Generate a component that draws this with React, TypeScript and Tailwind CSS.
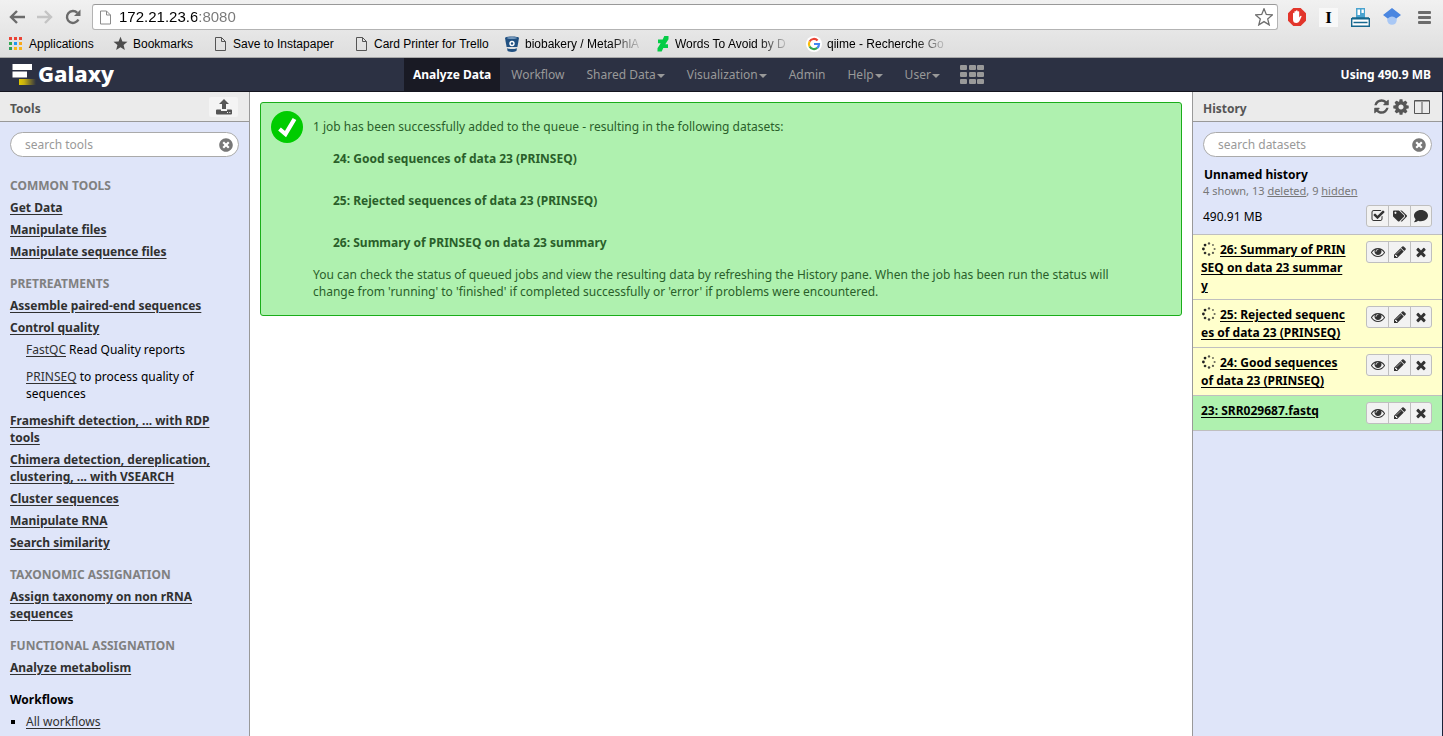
import React from "react";
import { FaComment, FaTags, FaTimesCircle } from "react-icons/fa";

const ICONS = {
  refresh:
    "M1639 1056q0 5-1 7-64 268-268 434.5t-478 166.5q-146 0-282.5-55t-243.5-157l-129 129q-19 19-45 19t-45-19-19-45v-448q0-26 19-45t45-19h448q26 0 45 19t19 45-19 45l-137 137q71 66 161 102t187 36q134 0 250-65t186-179q11-17 53-117 8-23 30-23h192q13 0 22.5 9.5t9.5 22.5zm25-800v448q0 26-19 45t-45 19h-448q-26 0-45-19t-19-45 19-45l138-138q-148-137-349-137-134 0-250 65t-186 179q-11 17-53 117-8 23-30 23h-199q-13 0-22.5-9.5t-9.5-22.5v-7q65-268 270-434.5t480-166.5q146 0 284 55.5t245 156.5l130-129q19-19 45-19t45 19 19 45z",
  cog: "M1152 896q0-106-75-181t-181-75-181 75-75 181 75 181 181 75 181-75 75-181zm512-109v222q0 12-8 23t-20 13l-185 28q-19 54-39 91 35 50 107 138 10 12 10 25t-9 23q-27 37-99 108t-94 71q-12 0-26-9l-138-108q-44 23-91 38-16 136-29 186-7 28-36 28h-222q-14 0-24.5-8.5t-11.5-21.5l-28-184q-49-16-90-37l-141 107q-10 9-25 9-14 0-25-11-126-114-165-168-7-10-7-23 0-12 8-23 15-21 51-66.5t54-70.5q-27-50-41-99l-183-27q-13-2-21-12.5t-8-23.5v-222q0-12 8-23t19-13l186-28q14-46 39-92-40-57-107-138-10-12-10-24 0-10 9-23 26-36 98.5-107.5t94.5-71.5q13 0 26 10l138 107q44-23 91-38 16-136 29-186 7-28 36-28h222q14 0 24.5 8.5t11.5 21.5l28 184q49 16 90 37l142-107q9-9 24-9 13 0 25 10 129 119 165 170 7 8 7 22 0 12-8 23-15 21-51 66.5t-54 70.5q26 50 41 98l183 28q13 2 21 12.5t8 23.5z",
  eye: "M1664 960q-152-236-381-353 61 104 61 225 0 185-131.5 316.5t-316.5 131.5-316.5-131.5-131.5-316.5q0-121 61-225-229 117-381 353 133 205 333.5 326.5t434.5 121.5 434.5-121.5 333.5-326.5zm-720-384q0-20-14-34t-34-14q-125 0-214.5 89.5t-89.5 214.5q0 20 14 34t34 14 34-14 14-34q0-86 61-147t147-61q20 0 34-14t14-34zm848 384q0 34-20 69-140 230-376.5 368.5t-499.5 138.5-499.5-139-376.5-368q-20-35-20-69t20-69q140-229 376.5-368t499.5-139 499.5 139 376.5 368q20 35 20 69z",
  pencil:
    "M491 1536l91-91-235-235-91 91v107h128v128h107zm523-928q0-22-22-22-10 0-17 7l-542 542q-7 7-7 17 0 22 22 22 10 0 17-7l542-542q7-7 7-17zm-54-192l416 416-832 832h-416v-416zm683 96q0 53-37 90l-166 166-416-416 166-165q36-38 90-38 53 0 91 38l235 234q37 39 37 91z",
  times:
    "M1490 1322q0 40-28 68l-136 136q-28 28-68 28t-68-28l-294-294-294 294q-28 28-68 28t-68-28l-136-136q-28-28-28-68t28-68l294-294-294-294q-28-28-28-68t28-68l136-136q28-28 68-28t68 28l294 294 294-294q28-28 68-28t68 28l136 136q28 28 28 68t-28 68l-294 294 294 294q28 28 28 68z",
  check:
    "M1472 930v318q0 119-84.5 203.5t-203.5 84.5h-832q-119 0-203.5-84.5t-84.5-203.5v-832q0-119 84.5-203.5t203.5-84.5h832q63 0 117 25 15 7 18 23 3 17-9 29l-49 49q-10 10-23 10-3 0-9-2-23-6-45-6h-832q-66 0-113 47t-47 113v832q0 66 47 113t113 47h832q66 0 113-47t47-113v-254q0-13 9-22l64-64q10-10 23-10 6 0 12 3 20 8 20 29zm231-489l-814 814q-24 24-57 24t-57-24l-430-430q-24-24-24-57t24-57l110-110q24-24 57-24t57 24l263 263 647-647q24-24 57-24t57 24l110 110q24 24 24 57t-24 57z",
};

function Icon({ name, className }: { name: keyof typeof ICONS; className: string }) {
  return (
    <svg viewBox="0 0 1792 1792" fill="currentColor" aria-hidden="true" className={className}>
      <path d={ICONS[name]} />
    </svg>
  );
}

function PageIcon({ className }: { className: string }) {
  return (
    <svg viewBox="0 0 11 14" fill="none" stroke="currentColor" aria-hidden="true" className={className}>
      <path d="M.5 .5H6.5L10.5 4.5V13.5H.5ZM6.5 .5V4.5H10.5" />
    </svg>
  );
}

function AppsIcon() {
  const colors = ["#ea4335", "#ea4335", "#ea4335", "#34a853", "#2196f3", "#f9a81a", "#2e9e5b", "#f9b61a", "#f9b61a"];
  return (
    <svg viewBox="0 0 13 13" className="size-[13px]" aria-hidden="true">
      {colors.map((c, i) => (
        <rect key={i} x={(i % 3) * 5} y={Math.floor(i / 3) * 5} width="3" height="3" fill={c} />
      ))}
    </svg>
  );
}

function BucketIcon() {
  return (
    <svg viewBox="0 0 14 16" className="h-4 w-3.5" aria-hidden="true">
      <path d="M0 2C0 0 14 0 14 2L12.4 11H1.6Z" fill="#205081" />
      <path d="M2 12.2Q7 14 12 12.2L11.4 15Q7 17 2.6 15Z" fill="#205081" />
      <ellipse cx="7" cy="2" rx="5" ry=".8" fill="#8fb0d0" />
      <circle cx="7" cy="7.5" r="2.7" fill="#fff" />
      <circle cx="7" cy="7.5" r="1.2" fill="#205081" />
    </svg>
  );
}

function DeviantIcon() {
  return (
    <svg viewBox="0 0 12 16" className="h-4 w-3" aria-hidden="true">
      <path d="M11.500 0V3.200L8.300 8.300H11V12H6.300L4.700 15.500H.5V12.300L3.700 7.200H1V3.500H5.700L7.300 0Z" fill="#05cc47" />
    </svg>
  );
}

function GoogleIcon() {
  return (
    <svg viewBox="0 0 16 16" className="size-4" aria-hidden="true">
      <circle cx="8" cy="8" r="8" fill="#fff" />
      <g fill="none" strokeWidth="2.200">
        <path d="M3.600 5.500A5 5 0 0 1 11.600 4.500" stroke="#ea4335" />
        <path d="M3.600 10.500A5 5 0 0 1 3.600 5.500" stroke="#fbbc05" />
        <path d="M11.300 11.800A5 5 0 0 1 3.600 10.500" stroke="#34a853" />
        <path d="M8 8H13A5 5 0 0 1 11.300 11.800" stroke="#4285f4" />
      </g>
    </svg>
  );
}

function StarIcon({ className, outline }: { className: string; outline?: boolean }) {
  return (
    <svg
      viewBox="0 0 18 18"
      aria-hidden="true"
      className={className}
      fill={outline ? "#fff" : "currentColor"}
      stroke="currentColor"
      strokeWidth={outline ? 1.3 : 0}
    >
      <path d="M9 .8L11.300 6.500L17.400 6.900L12.700 10.900L14.200 16.900L9 13.600L3.800 16.900L5.300 10.900L.6 6.900L6.700 6.500Z" />
    </svg>
  );
}

const bookmarks = [
  { label: "Applications", icon: <AppsIcon />, box: "w-[104px] gap-[7px]" },
  { label: "Bookmarks", icon: <StarIcon className="size-[15px] text-[#4d4d4d]" />, box: "w-[102px] gap-[5px]" },
  { label: "Save to Instapaper", icon: <PageIcon className="h-3.5 w-[11px] text-[#555]" />, box: "w-[141px] gap-[7px]" },
  { label: "Card Printer for Trello", icon: <PageIcon className="h-3.5 w-[11px] text-[#555]" />, box: "w-[149px] gap-[7px]" },
  { label: "biobakery / MetaPhlA", icon: <BucketIcon />, box: "w-[152px] gap-[6px]", fade: true },
  { label: "Words To Avoid by D", icon: <DeviantIcon />, box: "w-[149px] gap-[6px]", fade: true },
  { label: "qiime - Recherche Go", icon: <GoogleIcon />, box: "gap-[5px]", fade: true },
];

function BrowserBar() {
  return (
    <header className="border-b border-[#a8a8a8] bg-linear-to-b from-[#f1f1f1] to-[#dedede] font-['Liberation_Sans',Arial,sans-serif]">
      <div className="flex h-8 items-center pt-[2px] pl-[9px] pr-3">
        <div className="flex w-[83px] shrink-0 items-center gap-3 text-[#6b6b6b]">
          <button aria-label="Back">
            <svg viewBox="0 0 16 14" className="h-3.5 w-4" fill="none" stroke="currentColor" strokeWidth="2.400" aria-hidden="true">
              <path d="M16 7H2.500M8 1L2 7L8 13" />
            </svg>
          </button>
          <button aria-label="Forward" className="text-[#c4c4c4]">
            <svg viewBox="0 0 16 14" className="h-3.5 w-4" fill="none" stroke="currentColor" strokeWidth="2.400" aria-hidden="true">
              <path d="M0 7H13.500M8 1L14 7L8 13" />
            </svg>
          </button>
          <button aria-label="Reload">
            <svg viewBox="0 0 16 16" className="size-4" fill="none" stroke="currentColor" strokeWidth="2.400" aria-hidden="true">
              <path d="M13.400 10.500A6 6 0 1 1 12.300 3.800" />
              <path d="M15.500 .5V7H9Z" fill="currentColor" stroke="none" />
            </svg>
          </button>
        </div>
        <div className="flex h-[26px] min-w-0 flex-1 items-center rounded-[3px] border border-[#b3b3b3] border-t-[#999] bg-white pl-[7px] pr-1">
          <PageIcon className="h-[15px] w-[11px] shrink-0 text-[#8a8a8a]" />
          <input
            aria-label="Address"
            defaultValue="172.21.23.6:8080"
            className="ml-2 min-w-0 flex-1 bg-[linear-gradient(to_right,#000_78px,#777_78px)] bg-clip-text text-[15px] leading-5 text-transparent outline-none"
          />
          <button aria-label="Bookmark this page">
            <StarIcon outline className="size-[18px] text-[#6e6e6e]" />
          </button>
        </div>
        <div className="flex shrink-0 items-center pl-2.5">
          <button aria-label="Ad blocker" className="mr-[13px]">
            <svg viewBox="0 0 18 18" className="size-[18px]" aria-hidden="true">
              <path d="M5.300 0H12.700L18 5.300V12.700L12.700 18H5.300L0 12.700V5.300Z" fill="#e2352b" />
              <path
                d="M5 9V5.200Q5.700 4.500 6.400 5.200V8.200V3.400Q7.200 2.600 8 3.400V8V2.700Q8.800 2 9.600 2.700V8V3.600Q10.400 2.900 11.200 3.600V9.500L12.300 8Q13.600 7.500 13.600 8.500L11.500 13Q10.500 15 8.300 15Q5 15 5 11.500Z"
                fill="#fff"
              />
            </svg>
          </button>
          <button
            aria-label="Instapaper"
            className="mr-[13px] flex size-[19px] items-center justify-center bg-[#f8f8f8] font-['Liberation_Serif',serif] text-[17px] leading-none font-bold text-black"
          >
            I
          </button>
          <button aria-label="Card printer" className="mr-[13px]">
            <svg viewBox="0 0 19 19" className="size-[19px]" aria-hidden="true">
              <path d="M5 0H14V10H5Z" fill="#4aa3cf" />
              <path d="M6.500 1.500H9V7H6.500ZM10.500 1.500H12.800V5H10.500Z" fill="#fff" />
              <path d="M.7 10.700H18.300V18.300H.7Z" fill="#fff" stroke="#17688f" strokeWidth="1.400" />
              <path d="M2.500 14.500H16.500M1 10H18" stroke="#17688f" strokeWidth="1.600" />
            </svg>
          </button>
          <button aria-label="Scholar" className="mr-[17px]">
            <svg viewBox="0 0 18 18" className="size-[18px]" aria-hidden="true">
              <circle cx="9" cy="12" r="4.800" fill="#a9c8f5" />
              <path d="M9 0L18 7L13.300 10.500Q9 6.500 4.700 10.500L0 7Z" fill="#4a86e0" />
            </svg>
          </button>
          <button aria-label="Menu" className="text-[#6b6b6b]">
            <svg viewBox="0 0 13 13" className="size-[13px]" fill="currentColor" aria-hidden="true">
              <rect width="13" height="3" rx="1" />
              <rect y="5" width="13" height="3" rx="1" />
              <rect y="10" width="13" height="3" rx="1" />
            </svg>
          </button>
        </div>
      </div>
      <nav aria-label="Bookmarks bar" className="flex h-[25px] items-center pb-[2px] pl-[9px] text-[12px] text-black">
        {bookmarks.map((b) => (
          <a key={b.label} href="#" className={`flex shrink-0 items-center ${b.box}`}>
            <span className="shrink-0">{b.icon}</span>
            <span
              className={
                b.fade ? "whitespace-nowrap [mask-image:linear-gradient(to_right,#000_75%,rgba(0,0,0,0.15))]" : "whitespace-nowrap"
              }
            >
              {b.label}
            </span>
          </a>
        ))}
      </nav>
    </header>
  );
}

const tabs = [
  { label: "Workflow" },
  { label: "Shared Data", menu: true },
  { label: "Visualization", menu: true },
  { label: "Admin" },
  { label: "Help", menu: true },
  { label: "User", menu: true },
];

function Masthead() {
  return (
    <div className="flex h-[34px] items-stretch border-b border-[#14151f] bg-[#2c3143] text-[12px] text-[#999]">
      <a href="#" className="flex w-[404px] shrink-0 items-center gap-[2px] pl-3 text-white">
        <svg viewBox="0 0 24 21" className="h-[21px] w-6" aria-hidden="true">
          <defs>
            <linearGradient id="glow">
              <stop offset="0" stopColor="#e0c800" />
              <stop offset=".3" stopColor="#c8b010" />
              <stop offset="1" stopColor="#2c3143" />
            </linearGradient>
          </defs>
          <path d="M.5 0H20V6H.5ZM.5 7.500H15V13.500H.5Z" fill="#fff" />
          <path d="M7 15H24V21H7Z" fill="url(#glow)" />
        </svg>
        <span className="pb-1 text-[22px] leading-6 font-extrabold">Galaxy</span>
      </a>
      <nav aria-label="Main" className="flex items-stretch">
        <a href="#" aria-current="page" className="flex items-center bg-[#191a24] px-[9px] font-bold text-white">
          Analyze Data
        </a>
        {tabs.map((t) => (
          <a key={t.label} href="#" className="flex items-center gap-px px-[11px]">
            {t.label}
            {t.menu && <span className="mt-[3px] border-x-4 border-t-4 border-x-transparent border-t-[#999]" />}
          </a>
        ))}
        <button aria-label="Scratchbook" className="px-[9px]">
          <svg viewBox="0 0 25 19" className="h-[19px] w-[25px]" fill="currentColor" aria-hidden="true">
            {[0, 7, 14].map((y) => [0, 9, 17].map((x) => <rect key={`${x}-${y}`} x={x} y={y} width="7" height="5" rx="1" />))}
          </svg>
        </button>
      </nav>
      <div className="ml-auto flex items-center pr-3 font-bold text-white">Using 490.9 MB</div>
    </div>
  );
}

function SearchBox({ label }: { label: string }) {
  return (
    <div className="mx-2.5 mt-2.5 flex h-[25px] items-center rounded-full border border-[#aaa] bg-white pr-[5px] pl-3.5">
      <input
        type="text"
        aria-label={label}
        placeholder={label}
        className="min-w-0 flex-1 text-[12px] outline-none placeholder:text-[#999]"
      />
      <button aria-label="Clear search" className="text-[#777]">
        <FaTimesCircle className="size-3.5" />
      </button>
    </div>
  );
}

type Section = { title: string; links: { text: string; tools?: { link: string; rest: string }[] }[] };

const sections: Section[] = [
  {
    title: "COMMON TOOLS",
    links: [{ text: "Get Data" }, { text: "Manipulate files" }, { text: "Manipulate sequence files" }],
  },
  {
    title: "PRETREATMENTS",
    links: [
      { text: "Assemble paired-end sequences" },
      {
        text: "Control quality",
        tools: [
          { link: "FastQC", rest: " Read Quality reports" },
          { link: "PRINSEQ", rest: " to process quality of\nsequences" },
        ],
      },
      { text: "Frameshift detection, ... with RDP\ntools" },
      { text: "Chimera detection, dereplication,\nclustering, ... with VSEARCH" },
      { text: "Cluster sequences" },
      { text: "Manipulate RNA" },
      { text: "Search similarity" },
    ],
  },
  { title: "TAXONOMIC ASSIGNATION", links: [{ text: "Assign taxonomy on non rRNA\nsequences" }] },
  { title: "FUNCTIONAL ASSIGNATION", links: [{ text: "Analyze metabolism" }] },
];

function ToolsPanel() {
  return (
    <aside className="w-[250px] shrink-0 border-r border-[#999] bg-[#dfe5f9]">
      <div className="flex h-[30px] items-center justify-between border-b border-[#999] bg-[#ebebeb] pr-[11px] pl-2.5">
        <h2 className="pt-1 text-[12px] font-bold text-[#555]">Tools</h2>
        <button aria-label="Upload data" className="flex h-5 w-[29px] items-center justify-center rounded-[2px] bg-[#f4f4f4] text-[#555]">
          <svg viewBox="0 0 16 16" className="size-4" fill="currentColor" aria-hidden="true">
            <path d="M8 0L13 5H10V10H6V5H3Z" />
            <path fillRule="evenodd" d="M1 10.500H5V12H11V10.500H15Q16 10.500 16 11.500V14.500Q16 15.500 15 15.500H1Q0 15.500 0 14.500V11.500Q0 10.500 1 10.500ZM11 13V14H12V13ZM13.300 13V14H14.300V13Z" />
          </svg>
        </button>
      </div>
      <SearchBox label="search tools" />
      <div className="flex flex-col gap-[15px] px-2.5 pt-5 pb-1.5 text-[12px] leading-[17px]">
        {sections.map((s) => (
          <section key={s.title} className="flex flex-col gap-[5px]">
            <h3 className="font-bold text-[#808080]">{s.title}</h3>
            {s.links.map((l) => (
              <div key={l.text} className="whitespace-pre">
                <a href="#" className="font-bold text-[#303030] underline underline-offset-2">
                  {l.text}
                </a>
                {l.tools && (
                  <ul className="flex flex-col gap-2.5 pt-[5px] pb-[5px] pl-4 text-black">
                    {l.tools.map((t) => (
                      <li key={t.link}>
                        <a href="#" className="text-[#303030] underline underline-offset-2">
                          {t.link}
                        </a>
                        {t.rest}
                      </li>
                    ))}
                  </ul>
                )}
              </div>
            ))}
          </section>
        ))}
        <section className="flex flex-col gap-[5px] text-black">
          <h3 className="font-bold">Workflows</h3>
          <ul className="list-[square] pl-4">
            <li>
              <a href="#" className="text-[#303030] underline underline-offset-2">
                All workflows
              </a>
            </li>
          </ul>
        </section>
      </div>
    </aside>
  );
}

const outputs = [
  "24: Good sequences of data 23 (PRINSEQ)",
  "25: Rejected sequences of data 23 (PRINSEQ)",
  "26: Summary of PRINSEQ on data 23 summary",
];

function DoneMessage() {
  return (
    <main className="min-w-0 flex-1 bg-white p-2.5">
      <div role="status" className="flex gap-2.5 rounded-[3px] border border-[#1aad1a] bg-[#aff1af] pr-10 pb-[15px] pl-2.5 text-[12px] leading-[17px] text-[#2a5f2a]">
        <svg viewBox="0 0 32 32" className="mt-2 size-8 shrink-0" aria-hidden="true">
          <circle cx="16" cy="16" r="16" fill="#00cc00" />
          <path d="M8.500 18L14.500 23L23.500 8" fill="none" stroke="#fff" strokeWidth="4.200" />
        </svg>
        <div className="pt-[15px]">
          <p>1 job has been successfully added to the queue - resulting in the following datasets:</p>
          <ul className="my-[15px] flex flex-col gap-[25px] pl-5 font-bold">
            {outputs.map((o) => (
              <li key={o}>{o}</li>
            ))}
          </ul>
          <p>
            You can check the status of queued jobs and view the resulting data by refreshing the History pane. When the job has been run the status will
            change from 'running' to 'finished' if completed successfully or 'error' if problems were encountered.
          </p>
        </div>
      </div>
    </main>
  );
}

function ButtonGroup({ items }: { items: { label: string; icon: React.ReactNode }[] }) {
  return (
    <div className="mb-[2px] flex h-[22px] shrink-0 divide-x divide-[#bfbfbf] rounded-[3px] border border-[#bfbfbf] bg-[#f2f2f2] text-[#333]">
      {items.map((i) => (
        <button key={i.label} aria-label={i.label} className="flex w-[22px] items-center justify-center last:w-5">
          {i.icon}
        </button>
      ))}
    </div>
  );
}

function Spinner() {
  const opacities = [0.55, 0.25, 0.35, 0.5, 0.7, 0.85, 1, 1];
  return (
    <svg viewBox="0 0 14 14" className="mr-1 ml-px inline-block size-3.5 align-[-2px]" aria-hidden="true">
      {opacities.map((o, i) => (
        <circle
          key={i}
          cx={7 + 5.6 * Math.sin((i * Math.PI) / 4)}
          cy={7 - 5.6 * Math.cos((i * Math.PI) / 4)}
          r={0.9 + o * 0.5}
          fill="#222"
          opacity={0.5 + o * 0.5}
        />
      ))}
    </svg>
  );
}

const datasets = [
  { name: "26: Summary of PRIN\nSEQ on data 23 summar\ny", running: true },
  { name: "25: Rejected sequenc\nes of data 23 (PRINSEQ)", running: true },
  { name: "24: Good sequences\nof data 23 (PRINSEQ)", running: true },
  { name: "23: SRR029687.fastq", running: false },
];

function HistoryPanel() {
  return (
    <aside className="w-[251px] shrink-0 border-r border-l border-r-[#1c2238] border-l-[#999] bg-[#dfe5f9] text-[12px]">
      <div className="flex h-[30px] items-center justify-between border-b border-[#999] bg-[#ebebeb] pr-3 pl-2.5 text-[#555]">
        <h2 className="pt-1 font-bold">History</h2>
        <div className="flex items-center gap-[2px]">
          <button aria-label="Refresh history">
            <Icon name="refresh" className="size-[17px]" />
          </button>
          <button aria-label="History options">
            <Icon name="cog" className="size-[18px]" />
          </button>
          <button aria-label="View all histories">
            <svg viewBox="0 0 16 14" className="ml-[2px] h-3.5 w-4" fill="none" stroke="currentColor" aria-hidden="true">
              <path d="M1 1H15M.5 13.500V.5H15.500V13.500ZM8 2V13" />
            </svg>
          </button>
        </div>
      </div>
      <SearchBox label="search datasets" />
      <div className="border-b border-[#bfbfbf] px-2.5 pt-[9px] pb-[5px]">
        <h3 className="pl-px leading-[17px] font-bold text-black">Unnamed history</h3>
        <p className="text-[11px] leading-4 text-[#777]">
          4 shown, 13{" "}
          <a href="#" className="underline">
            deleted
          </a>
          , 9{" "}
          <a href="#" className="underline">
            hidden
          </a>
        </p>
        <div className="mt-1.5 flex items-center justify-between text-black">
          <span>490.91 MB</span>
          <ButtonGroup
            items={[
              { label: "Select datasets", icon: <Icon name="check" className="size-3.5" /> },
              { label: "Edit tags", icon: <FaTags className="size-3.5" /> },
              { label: "Edit annotation", icon: <FaComment className="size-3.5" /> },
            ]}
          />
        </div>
      </div>
      <ul>
        {datasets.map((d) => (
          <li
            key={d.name}
            className={`flex items-start justify-between border-b border-[#bfbfbf] pt-1.5 pr-2.5 pb-1 pl-2 ${d.running ? "min-h-12 bg-[#ffffcc]" : "bg-[#aff1af]"}`}
          >
            <div className="leading-[18px] font-bold whitespace-pre text-black">
              {d.running && <Spinner />}
              <a href="#" className="underline underline-offset-2">
                {d.name}
              </a>
            </div>
            <ButtonGroup
              items={[
                { label: "View data", icon: <Icon name="eye" className="size-3.5" /> },
                { label: "Edit attributes", icon: <Icon name="pencil" className="size-3.5" /> },
                { label: "Delete", icon: <Icon name="times" className="size-3.5" /> },
              ]}
            />
          </li>
        ))}
      </ul>
    </aside>
  );
}

export default function App() {
  return (
    <div className="flex min-h-screen flex-col bg-white font-['Noto_Sans',sans-serif]">
      <BrowserBar />
      <Masthead />
      <div className="flex flex-1 items-stretch">
        <ToolsPanel />
        <DoneMessage />
        <HistoryPanel />
      </div>
    </div>
  );
}
